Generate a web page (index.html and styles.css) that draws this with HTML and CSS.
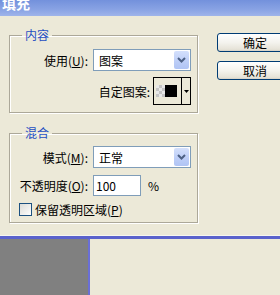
FILE: index.html
```html
<!DOCTYPE html>
<html lang="zh">
<head>
<meta charset="utf-8">
<link rel="stylesheet" href="styles.css">
</head>
<body>
<div class="titlebar"><span class="title">填充</span></div>
<div class="dialog">
  <div class="groups">
    <fieldset class="group g1">
      <legend>内容</legend>
      <div class="row">
        <label class="lbl">使用(<u>U</u>):</label>
        <div class="combo"><span class="val">图案</span><span class="dd"><svg width="9" height="6" viewBox="0 0 9 6"><path d="M1 1 L4.5 4.5 L8 1" fill="none" stroke="#4d6185" stroke-width="2"/></svg></span></div>
      </div>
      <div class="row2">
        <span class="lbl2">自定图案:</span>
        <div class="picker">
          <div class="swatch"><span class="checker"></span><span class="black"></span></div>
          <div class="parrow"><svg width="5" height="3" viewBox="0 0 5 3"><path d="M0 0 H5 L2.5 3 Z" fill="#000"/></svg></div>
        </div>
      </div>
    </fieldset>
    <fieldset class="group g2">
      <legend>混合</legend>
      <div class="row">
        <label class="lbl">模式(<u>M</u>):</label>
        <div class="combo"><span class="val">正常</span><span class="dd"><svg width="9" height="6" viewBox="0 0 9 6"><path d="M1 1 L4.5 4.5 L8 1" fill="none" stroke="#4d6185" stroke-width="2"/></svg></span></div>
      </div>
      <div class="row r-op">
        <label class="lbl">不透明度(<u>O</u>):</label>
        <div class="input">100</div>
        <span class="pct">%</span>
      </div>
      <div class="chk">
        <span class="box"></span>
        <span>保留透明区域(<u>P</u>)</span>
      </div>
    </fieldset>
  </div>
  <div class="buttons">
    <div class="btn">确定</div>
    <div class="btn">取消</div>
  </div>
</div>
<div class="edge"></div>
<div class="below">
  <div class="canvas"></div>
  <div class="vline"></div>
</div>
</body>
</html>
```
FILE: styles.css
```css
html, body {
  margin: 0;
  padding: 0;
}
body {
  width: 280px;
  height: 295px;
  overflow: hidden;
  background: #ECE9D8;
  font-family: "Noto Sans CJK SC", sans-serif;
  font-size: 12px;
  color: #000;
}
u { text-decoration: underline; text-underline-offset: 1px; }

.titlebar {
  height: 16px;
  overflow: hidden;
  background: linear-gradient(to bottom, #7391dc 0%, #89a3e4 60%, #9fb4ea 100%);
}
.title {
  display: block;
  color: #fff;
  font-weight: bold;
  font-size: 14px;
  line-height: 14px;
  margin-top: -4px;
  padding-left: 2px;
}

.dialog {
  height: 219px;
  display: flex;
  padding-left: 9px;
}
.groups {
  width: 189px;
  display: flex;
  flex-direction: column;
}
.group {
  margin: 0;
  padding: 0 6px 7px 0;
  border: 1px solid #aca899;
  box-shadow: inset 1px 1px 0 #fff, 1px 1px 0 #fff;
  min-width: 0;
}
.g1 { margin-top: 12px; }
.g2 { margin-top: 13px; padding-bottom: 6px; }
legend {
  margin-left: 12px;
  padding: 0 3px;
  height: 14px;
  line-height: 14px;
  color: #1f4fc2;
  font-size: 12px;
}
.row {
  display: flex;
  align-items: center;
  height: 22px;
}
.g1 .row { margin-top: 7px; }
.g2 .row { margin-top: 6px; }
.g2 .r-op { margin-top: 7px; height: 21px; }
.lbl {
  width: 78px;
  text-align: right;
  padding-right: 5px;
  white-space: nowrap;
}
.combo {
  width: 96px;
  height: 20px;
  border: 1px solid #7f9db9;
  background: #fff;
  display: flex;
  align-items: center;
  justify-content: space-between;
}
.val { padding-left: 5px; }
.dd {
  width: 15px;
  height: 18px;
  margin-right: 1px;
  border-radius: 2px;
  background: linear-gradient(to bottom, #d4e0fc 0%, #bccdf7 60%, #b0c4f4 100%);
  display: flex;
  align-items: center;
  justify-content: center;
}
.row2 {
  display: flex;
  align-items: center;
  justify-content: flex-end;
  margin-top: 6px;
  height: 28px;
}
.lbl2 { margin-right: 3px; }
.picker {
  width: 36px;
  height: 26px;
  border: 1px solid #000;
  display: flex;
}
.swatch {
  width: 25px;
  border-right: 1px solid #000;
  display: flex;
  align-items: center;
  padding-left: 2px;
}
.checker {
  width: 9px;
  height: 12px;
  background-color: #e8e8e8;
  background-image: linear-gradient(45deg, #c4c4c4 25%, transparent 25%, transparent 75%, #c4c4c4 75%),
                    linear-gradient(45deg, #c4c4c4 25%, transparent 25%, transparent 75%, #c4c4c4 75%);
  background-size: 6px 6px;
  background-position: 0 0, 3px 3px;
}
.black {
  width: 12px;
  height: 12px;
  background: #000;
}
.parrow {
  flex: 1;
  display: flex;
  align-items: center;
  justify-content: center;
}
.input {
  width: 44px;
  height: 19px;
  border: 1px solid #7f9db9;
  background: #fff;
  line-height: 19px;
  padding-left: 2px;
}
.pct { margin-left: 7px; }
.chk {
  display: flex;
  align-items: center;
  margin-top: 7px;
  height: 13px;
  padding-left: 9px;
}
.box {
  width: 11px;
  height: 11px;
  border: 1px solid #1c5180;
  background: linear-gradient(135deg, #dcdcd7 0%, #f4f4f2 70%, #fff 100%);
  margin-right: 3px;
}

.buttons {
  margin-left: 19px;
  margin-top: 17px;
  display: flex;
  flex-direction: column;
  gap: 9px;
}
.btn {
  width: 74px;
  height: 17px;
  border: 1px solid #003c74;
  border-radius: 3px;
  background: linear-gradient(to bottom, #ffffff 0%, #f4f3ee 50%, #e6e3d8 90%, #d6d0c5 100%);
  text-align: center;
  line-height: 17px;
}

.edge {
  height: 3px;
  border-top: 1px solid #f7f6f0;
  background: #5a62cc;
}
.below {
  display: flex;
  height: 56px;
}
.canvas {
  width: 88px;
  background: #808080;
}
.vline {
  width: 2px;
  background: #6a6fd6;
}
```
